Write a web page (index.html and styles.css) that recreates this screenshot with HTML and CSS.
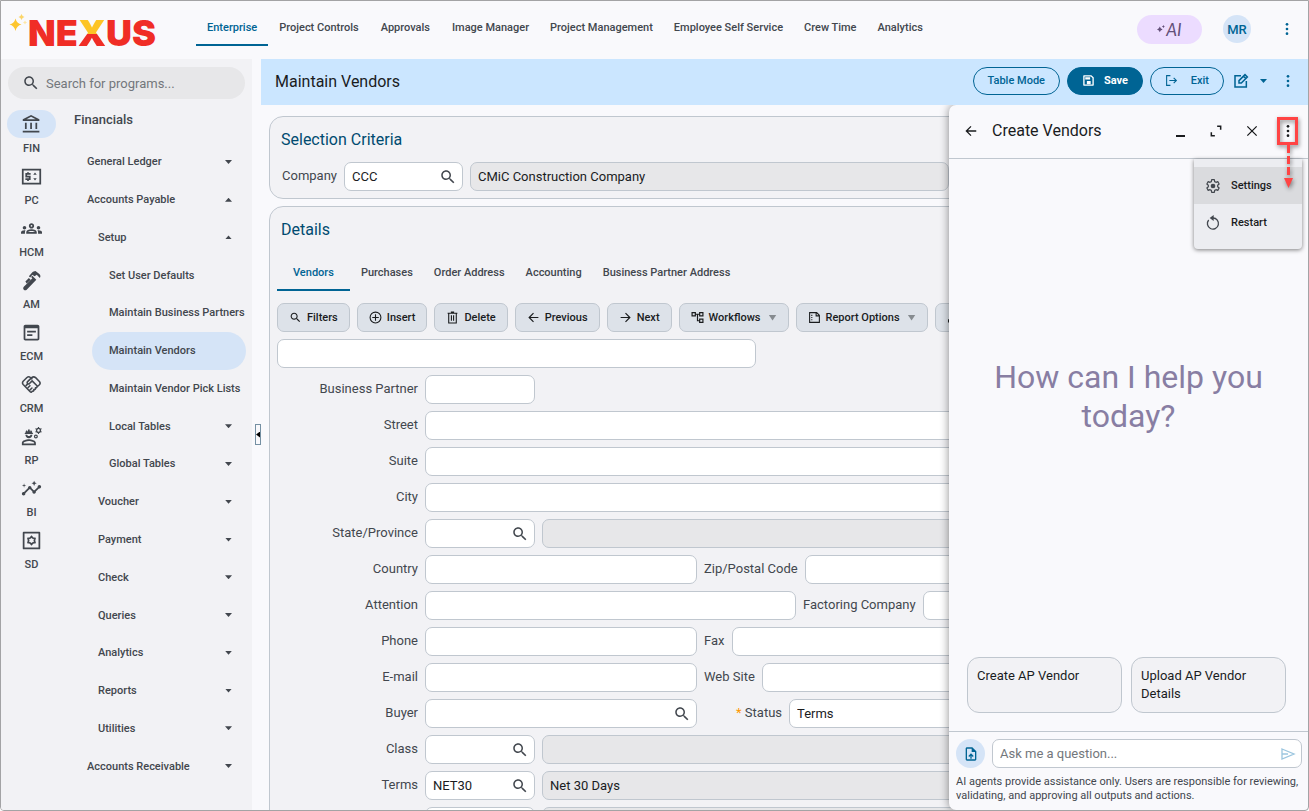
FILE: index.html
```html
<!DOCTYPE html>
<html lang="en">
<head>
<meta charset="utf-8">
<meta name="viewport" content="width=device-width, initial-scale=1">
<title>Maintain Vendors</title>
<link rel="stylesheet" href="styles.css">
</head>

<body>

<svg class="sprite" aria-hidden="true">
  <symbol id="i-search" viewBox="0 0 24 24"><path d="M15.5 14h-.79l-.28-.27C15.41 12.59 16 11.11 16 9.5 16 5.91 13.09 3 9.5 3S3 5.91 3 9.5 5.91 16 9.5 16c1.61 0 3.09-.59 4.23-1.57l.27.28v.79l5 4.99L20.49 19l-4.99-5zm-6 0C7.01 14 5 11.99 5 9.5S7.01 5 9.5 5 14 7.01 14 9.5 11.99 14 9.5 14z"/></symbol>
  <symbol id="i-bank" viewBox="0 0 24 24"><path d="M6.500 10h-2v7h2v-7zm6 0h-2v7h2v-7zm8.500 9H2v2h19v-2zm-2.500-9h-2v7h2v-7zm-7-6.740L16.710 6H6.290l5.210-2.740m0-2.260L2 6v2h19V6l-9.500-5z"/></symbol>
  <symbol id="i-pc" viewBox="0 0 24 24"><path fill="none" stroke="currentColor" stroke-width="2" d="M2 4h20v16H2z"/><path fill="none" stroke="currentColor" stroke-width="2" d="M11 9H6v3h4v3H5M8 7v2m0 6v2"/><path d="M14 10l2-2.500 2 2.500zm0 4l2 2.500 2-2.500z"/></symbol>
  <symbol id="i-groups" viewBox="0 0 24 24"><path d="M4 13c1.1 0 2-.9 2-2s-.9-2-2-2-2 .9-2 2 .9 2 2 2zm1.130 1.100c-.37-.06-.74-.1-1.130-.1-.99 0-1.930.21-2.780.58C.48 14.900 0 15.620 0 16.430V18h4.500v-1.610c0-.83.23-1.610.63-2.290zM20 13c1.100 0 2-.9 2-2s-.9-2-2-2-2 .9-2 2 .9 2 2 2zm4 3.430c0-.81-.48-1.530-1.220-1.850-.85-.37-1.790-.58-2.780-.58-.39 0-.76.04-1.130.1.4.68.63 1.460.63 2.290V18H24v-1.570zM16.240 13.650c-1.170-.52-2.610-.9-4.240-.9s-3.070.39-4.240.9C6.680 14.130 6 15.210 6 16.390V18h12v-1.610c0-1.180-.68-2.260-1.760-2.740zM8.070 16c.09-.23.13-.39.91-.69.97-.38 1.990-.56 3.020-.56s2.050.18 3.020.56c.77.3.81.46.91.69H8.070zM12 8c.55 0 1 .45 1 1s-.45 1-1 1-1-.45-1-1 .45-1 1-1m0-2c-1.660 0-3 1.340-3 3s1.340 3 3 3 3-1.340 3-3-1.340-3-3-3z"/></symbol>
  <symbol id="i-plumbing" viewBox="0 0 24 24"><path d="m15.500 9 2 2L6.500 22.500c-1 1-2.400 1-3.300 0-.9-.9-.9-2.300 0-3.300L13 9.500l-1.500-1.500 1.400-1.400zM5 13l4-4 2 2-4.500 4.500zM9 7l4-4.500c1-.9 2-1.300 3.500-1.500L21 4.500c1.500 1.500 1.500 3 .5 4.500L18 5.500 15.500 7 13 5.500 10.500 8.500z"/></symbol>
  <symbol id="i-wysiwyg" viewBox="0 0 24 24"><path d="M19 3H5c-1.110 0-2 .9-2 2v14c0 1.100.89 2 2 2h14c1.100 0 2-.9 2-2V5c0-1.100-.89-2-2-2zm0 16H5V7h14v12zm-2-7H7v-2h10v2zm-4 4H7v-2h6v2z"/></symbol>
  <symbol id="i-handshake" viewBox="0 0 24 24"><path fill="none" stroke="currentColor" stroke-width="1.800" stroke-linejoin="round" stroke-linecap="round" d="M12.500 5.500 10.800 4C9.500 3 8 3 6.800 4L2.500 8.300c-1 1.200-1 2.500 0 3.700l8 8.300c.8.900 2 .7 2.200-.6 1.200.3 2.200-.6 2-1.900 1.300.2 2.200-.9 1.900-2.100 1.300 0 2.200-1 1.700-2.300l-5.600-5.500-3 3c-1.400 1.200-3.200-.3-2.400-1.900l4.900-4.800c1.500-1.300 3-1.300 4.500 0l4.300 4.300c1.200 1.400 1.200 2.500 0 3.800l-2.500 2.300M6 13l2-2m.2 4.500 2-2m.3 4.500 2-2"/></symbol>
  <symbol id="i-engineer" viewBox="0 0 24 24"><path d="M9 15c-2.670 0-8 1.340-8 4v3h16v-3c0-2.660-5.330-4-8-4zm-6 5v-1c0-.7 3-2 6-2s6 1.300 6 2v1zM4.700 9h8.600c.8 0 .8-1 0-1H13c0-1.500-.8-2.800-2-3.400V6h-1V4H8v2H7V4.600C5.800 5.200 5 6.500 5 8h-.3c-.8 0-.8 1 0 1zM5 10c0 2.200 1.800 4 4 4s4-1.800 4-4h-2c-.5 2-3.500 2-4 0z"/><circle cx="20" cy="5" r="2.200" fill="none" stroke="currentColor" stroke-width="1.500"/><path fill="none" stroke="currentColor" stroke-width="1.300" d="M20 1v2m0 4v2m-3.500-6 1.700 1m3.600 2 1.700 1m0-4-1.700 1m-3.600 2-1.700 1"/><circle cx="17" cy="12" r="1.600" fill="none" stroke="currentColor" stroke-width="1.400"/></symbol>
  <symbol id="i-insights" viewBox="0 0 24 24"><path d="M21 8c-1.450 0-2.260 1.440-1.930 2.510l-3.550 3.560c-.3-.09-.74-.09-1.040 0l-2.550-2.550C12.270 10.450 11.460 9 10 9c-1.450 0-2.270 1.440-1.930 2.520l-4.560 4.550C2.440 15.740 1 16.550 1 18c0 1.100.9 2 2 2 1.450 0 2.260-1.440 1.930-2.510l4.550-4.560c.3.09.74.09 1.040 0l2.550 2.550C12.730 16.550 13.540 18 15 18c1.450 0 2.270-1.440 1.930-2.520l3.560-3.550C21.560 12.260 23 11.450 23 10c0-1.100-.9-2-2-2zM15 9l.94-2.070L18 6l-2.060-.93L15 3l-.92 2.070L12 6l2.080.93zM3.500 11 4 9l2-.5L4 8l-.5-2L3 8l-2 .5L3 9z"/></symbol>
  <symbol id="i-gear" viewBox="0 0 24 24"><path fill="none" stroke="currentColor" stroke-width="1.800" stroke-linejoin="round" d="M10 2.500h4l.5 2.900 2 1.100 2.700-1 2 3.400-2.200 1.900v2.400l2.200 1.900-2 3.400-2.700-1-2 1.100-.5 2.900h-4l-.5-2.900-2-1.100-2.700 1-2-3.400L5 13.200v-2.400L2.800 8.900l2-3.400 2.700 1 2-1.100z"/><circle cx="12" cy="12" r="3.500"/></symbol>
  <symbol id="i-sd" viewBox="0 0 24 24"><path fill="none" stroke="currentColor" stroke-width="2" stroke-linejoin="round" d="M3 3h18v18H3z"/><path fill="none" stroke="currentColor" stroke-width="2" d="m12 7.500 1.500 1.700 2.400.5-.6 2.300.6 2.300-2.400.5-1.500 1.700-1.500-1.700-2.400-.5.6-2.300-.6-2.300 2.400-.5z"/></symbol>
  <symbol id="i-dots" viewBox="0 0 24 24"><circle cx="12" cy="5" r="2"/><circle cx="12" cy="12" r="2"/><circle cx="12" cy="19" r="2"/></symbol>
  <symbol id="i-save" viewBox="0 0 24 24"><path fill="none" stroke="currentColor" stroke-width="2.500" stroke-linejoin="round" d="M3.500 3.500H17L20.500 7v13.500h-17z"/><path d="M6 6h9v4H6zm3 7h7v6H9z"/></symbol>
  <symbol id="i-exit" viewBox="0 0 24 24"><path fill="none" stroke="currentColor" stroke-width="2" d="M10 3H3v18h7M8 12h13m-5-5 5 5-5 5"/></symbol>
  <symbol id="i-edit" viewBox="0 0 24 24"><path fill="none" stroke="currentColor" stroke-width="2.300" d="M12 4H3v17h17v-9M9 15v-3.500l9-9 3.500 3.500-9 9zM16 5l3 3"/></symbol>
  <symbol id="i-plus" viewBox="0 0 24 24"><circle cx="12" cy="12" r="10" fill="none" stroke="currentColor" stroke-width="2"/><path fill="none" stroke="currentColor" stroke-width="2" d="M12 6v12M6 12h12"/></symbol>
  <symbol id="i-trash" viewBox="0 0 24 24"><path fill="none" stroke="currentColor" stroke-width="2" d="M5 5v17h14V5M3 4h18M9 2h6M10 8v10m4-10v10"/></symbol>
  <symbol id="i-left" viewBox="0 0 24 24"><path fill="none" stroke="currentColor" stroke-width="2.200" d="M21 12H4m8-8-8 8 8 8"/></symbol>
  <symbol id="i-right" viewBox="0 0 24 24"><path fill="none" stroke="currentColor" stroke-width="2.200" d="M3 12h17m-8-8 8 8-8 8"/></symbol>
  <symbol id="i-flow" viewBox="0 0 24 24"><path fill="none" stroke="currentColor" stroke-width="2.200" d="M2 3h6v6H2zM16 3h6v6h-6zM16 15h6v6h-6zM8 6h8M12 6v12h4"/></symbol>
  <symbol id="i-report" viewBox="0 0 24 24"><path fill="none" stroke="currentColor" stroke-width="2" d="M3 3h13l5 5v13H3zM15 3v6h6"/><path d="M6 7h2v2H6zm0 4h2v2H6zm0 4h2v2H6z"/></symbol>
  <symbol id="i-download" viewBox="0 0 24 24"><path fill="none" stroke="currentColor" stroke-width="2.200" d="M3 15v5h18v-5M12 3v12m-5-5 5 5 5-5"/></symbol>
  <symbol id="i-expand" viewBox="0 0 24 24"><path fill="none" stroke="currentColor" stroke-width="2.600" d="M14 4h6v6M10 20H4v-6"/></symbol>
  <symbol id="i-close" viewBox="0 0 24 24"><path fill="none" stroke="currentColor" stroke-width="2.200" d="m4 4 16 16M20 4 4 20"/></symbol>
  <symbol id="i-restart" viewBox="0 0 24 24"><path fill="none" stroke="currentColor" stroke-width="2" d="M12 4.500a8.300 8.300 0 1 1-6.500 3"/><path d="m13 0-6 4.500L13 9z"/></symbol>
  <symbol id="i-upload" viewBox="0 0 24 24"><path d="M14 2H6c-1.100 0-2 .9-2 2v16c0 1.100.9 2 2 2h12c1.100 0 2-.9 2-2V8l-6-6zm4 18H6V4h7v5h5v11zM8 15l1.400 1.400 1.600-1.600V19h2v-4.200l1.600 1.600L16 15l-4-4z"/></symbol>
  <symbol id="i-send" viewBox="0 0 24 24"><path fill="none" stroke="currentColor" stroke-width="2" d="M3 4.500 21 12 3 19.500V4.500zM3 12h9"/></symbol>
</svg>

<div class="app">
  <header class="hd">
    <a class="logo" href="#home" aria-label="NEXUS">
      <svg class="logo__stars" viewBox="0 0 18 18" aria-hidden="true">
        <path fill="#fdc62f" d="M6.500 4.500q1.200 5 6 6-4.800 1-6 6.500-1.200-5.500-6-6.500 4.800-1 6-6z"/>
        <path fill="#fbd568" d="M12.500 0q.7 2.300 3 3-2.300.7-3 3-.7-2.300-3-3 2.300-.7 3-3z"/>
        <path fill="#fde6a4" d="M16 6.500q.4 1.600 2 2-1.600.4-2 2-.4-1.600-2-2 1.600-.4 2-2z"/>
      </svg>
      <span class="logo__text">NE<span class="logo__x">X</span>US</span>
    </a>
    <nav class="hd__nav">
      <a class="hd__a hd__a--active" href="#enterprise">Enterprise</a>
      <a class="hd__a" href="#project-controls">Project Controls</a>
      <a class="hd__a" href="#approvals">Approvals</a>
      <a class="hd__a" href="#images">Image Manager</a>
      <a class="hd__a" href="#pm">Project Management</a>
      <a class="hd__a" href="#ess">Employee Self Service</a>
      <a class="hd__a" href="#crew">Crew Time</a>
      <a class="hd__a" href="#analytics">Analytics</a>
    </nav>
    <div class="hd__tools">
      <button type="button" class="ai">
        <svg class="ai__star" viewBox="0 0 10 10" aria-hidden="true"><path d="M3.500 2q.6 2.900 3.500 3.500Q4.100 6.100 3.500 9 2.900 6.100 0 5.500 2.900 4.900 3.500 2zM8 0q.3 1.700 2 2-1.700.3-2 2-.3-1.700-2-2 1.700-.3 2-2z"/></svg>
        <span>AI</span>
      </button>
      <button type="button" class="avatar">MR</button>
      <button type="button" class="ibtn ibtn--blue" aria-label="More"><svg class="icon"><use href="#i-dots"/></svg></button>
    </div>
  </header>

  <div class="body">
    <aside class="side">
      <div class="finder">
        <svg class="icon icon--l"><use href="#i-search"/></svg>
        <input type="search" aria-label="Search for programs" placeholder="Search for programs...">
      </div>
      <div class="side__cols">
        <nav class="rail">
          <a class="rail__a rail__a--active" href="#fin"><span class="rail__i"><svg class="icon"><use href="#i-bank"/></svg></span>FIN</a>
          <a class="rail__a" href="#pc"><span class="rail__i"><svg class="icon"><use href="#i-pc"/></svg></span>PC</a>
          <a class="rail__a" href="#hcm"><span class="rail__i"><svg class="icon"><use href="#i-groups"/></svg></span>HCM</a>
          <a class="rail__a" href="#am"><span class="rail__i"><svg class="icon"><use href="#i-plumbing"/></svg></span>AM</a>
          <a class="rail__a" href="#ecm"><span class="rail__i"><svg class="icon"><use href="#i-wysiwyg"/></svg></span>ECM</a>
          <a class="rail__a" href="#crm"><span class="rail__i"><svg class="icon"><use href="#i-handshake"/></svg></span>CRM</a>
          <a class="rail__a" href="#rp"><span class="rail__i"><svg class="icon"><use href="#i-engineer"/></svg></span>RP</a>
          <a class="rail__a" href="#bi"><span class="rail__i"><svg class="icon"><use href="#i-insights"/></svg></span>BI</a>
          <a class="rail__a" href="#sd"><span class="rail__i"><svg class="icon"><use href="#i-sd"/></svg></span>SD</a>
        </nav>
        <nav class="tree">
          <h2 class="tree__title">Financials</h2>
          <ul class="tree__ul">
            <li><button type="button" class="tree__b caret">General Ledger</button></li>
            <li><button type="button" class="tree__b caret caret--up">Accounts Payable</button></li>
            <li class="l2"><button type="button" class="tree__b caret caret--up">Setup</button></li>
            <li class="l3"><a class="tree__b" href="#defaults">Set User Defaults</a></li>
            <li class="l3"><a class="tree__b" href="#partners">Maintain Business Partners</a></li>
            <li class="l3"><a class="tree__b tree__b--active" href="#vendors">Maintain Vendors</a></li>
            <li class="l3"><a class="tree__b" href="#picklists">Maintain Vendor Pick Lists</a></li>
            <li class="l3"><button type="button" class="tree__b caret">Local Tables</button></li>
            <li class="l3"><button type="button" class="tree__b caret">Global Tables</button></li>
            <li class="l2"><button type="button" class="tree__b caret">Voucher</button></li>
            <li class="l2"><button type="button" class="tree__b caret">Payment</button></li>
            <li class="l2"><button type="button" class="tree__b caret">Check</button></li>
            <li class="l2"><button type="button" class="tree__b caret">Queries</button></li>
            <li class="l2"><button type="button" class="tree__b caret">Analytics</button></li>
            <li class="l2"><button type="button" class="tree__b caret">Reports</button></li>
            <li class="l2"><button type="button" class="tree__b caret">Utilities</button></li>
            <li><button type="button" class="tree__b caret">Accounts Receivable</button></li>
          </ul>
        </nav>
      </div>
    </aside>

    <div class="gutter"><button type="button" class="gutter__b" aria-label="Collapse menu"></button></div>

    <main class="main">
      <div class="bar">
        <h1 class="bar__title">Maintain Vendors</h1>
        <button type="button" class="pill">Table Mode</button>
        <button type="button" class="pill pill--fill"><svg class="icon"><use href="#i-save"/></svg>Save</button>
        <button type="button" class="pill pill--exit"><svg class="icon"><use href="#i-exit"/></svg>Exit</button>
        <button type="button" class="ibtn ibtn--blue ibtn--edit caret" aria-label="Edit"><svg class="icon"><use href="#i-edit"/></svg></button>
        <button type="button" class="ibtn ibtn--blue" aria-label="More actions"><svg class="icon"><use href="#i-dots"/></svg></button>
      </div>

      <div class="content">
        <section class="card">
          <h2 class="card__title">Selection Criteria</h2>
          <div class="row row--company">
            <label for="company">Company</label>
            <div class="field w-company"><input id="company" value="CCC"><button type="button" class="lookup" aria-label="Find company"><svg class="icon"><use href="#i-search"/></svg></button></div>
            <div class="field field--ro w-xl"><input aria-label="Company name" value="CMiC Construction Company" readonly></div>
          </div>
        </section>

        <section class="card card--details">
          <h2 class="card__title">Details</h2>
          <nav class="tabs">
            <a class="tabs__a tabs__a--active" href="#tab-vendors">Vendors</a>
            <a class="tabs__a" href="#tab-purchases">Purchases</a>
            <a class="tabs__a" href="#tab-order">Order Address</a>
            <a class="tabs__a" href="#tab-accounting">Accounting</a>
            <a class="tabs__a" href="#tab-bpa">Business Partner Address</a>
          </nav>
          <div class="tools">
            <button type="button" class="tool"><svg class="icon"><use href="#i-search"/></svg>Filters</button>
            <button type="button" class="tool"><svg class="icon"><use href="#i-plus"/></svg>Insert</button>
            <button type="button" class="tool"><svg class="icon"><use href="#i-trash"/></svg>Delete</button>
            <button type="button" class="tool"><svg class="icon"><use href="#i-left"/></svg>Previous</button>
            <button type="button" class="tool"><svg class="icon"><use href="#i-right"/></svg>Next</button>
            <button type="button" class="tool tool--menu"><svg class="icon"><use href="#i-flow"/></svg>Workflows</button>
            <button type="button" class="tool tool--menu"><svg class="icon"><use href="#i-report"/></svg>Report Options</button>
            <button type="button" class="tool"><svg class="icon"><use href="#i-download"/></svg>Import</button>
          </div>
          <div class="form">
            <div class="field w-xl"><input aria-label="Vendor"></div>
            <div class="row"><label for="bp">Business Partner</label><div class="field w-s"><input id="bp"></div></div>
            <div class="row"><label for="street">Street</label><div class="field w-fill"><input id="street"></div></div>
            <div class="row"><label for="suite">Suite</label><div class="field w-fill"><input id="suite"></div></div>
            <div class="row"><label for="city">City</label><div class="field w-fill"><input id="city"></div></div>
            <div class="row">
              <label for="state">State/Province</label>
              <div class="field w-s"><input id="state"><button type="button" class="lookup" aria-label="Find state"><svg class="icon"><use href="#i-search"/></svg></button></div>
              <div class="field field--ro w-fill"><input aria-label="State name" readonly></div>
            </div>
            <div class="row">
              <label for="country">Country</label><div class="field w-m"><input id="country"></div>
              <label for="zip">Zip/Postal Code</label><div class="field w-fill"><input id="zip"></div>
            </div>
            <div class="row">
              <label for="attn">Attention</label><div class="field w-l"><input id="attn"></div>
              <label for="factoring">Factoring Company</label><div class="field w-fill"><input id="factoring"></div>
            </div>
            <div class="row">
              <label for="phone">Phone</label><div class="field w-m"><input id="phone"></div>
              <label for="fax">Fax</label><div class="field w-fill"><input id="fax"></div>
            </div>
            <div class="row">
              <label for="email">E-mail</label><div class="field w-m"><input id="email"></div>
              <label for="web">Web Site</label><div class="field w-fill"><input id="web"></div>
            </div>
            <div class="row">
              <label for="buyer">Buyer</label>
              <div class="field w-m"><input id="buyer"><button type="button" class="lookup" aria-label="Find buyer"><svg class="icon"><use href="#i-search"/></svg></button></div>
              <label for="status" class="status"><span class="req">*</span> Status</label>
              <div class="field w-fill"><select id="status"><option>Terms</option></select></div>
            </div>
            <div class="row">
              <label for="class">Class</label>
              <div class="field w-s"><input id="class"><button type="button" class="lookup" aria-label="Find class"><svg class="icon"><use href="#i-search"/></svg></button></div>
              <div class="field field--ro w-fill"><input aria-label="Class name" readonly></div>
            </div>
            <div class="row">
              <label for="terms">Terms</label>
              <div class="field w-s"><input id="terms" value="NET30"><button type="button" class="lookup" aria-label="Find terms"><svg class="icon"><use href="#i-search"/></svg></button></div>
              <div class="field field--ro w-fill"><input aria-label="Terms name" value="Net 30 Days" readonly></div>
            </div>
            <div class="row">
              <label for="more"></label>
              <div class="field w-s"><input id="more"></div>
              <div class="field field--ro w-fill"><input aria-label="Description" readonly></div>
            </div>
          </div>
        </section>

        <!-- agent panel, floats over the form -->
        <aside class="chat">
          <header class="chat__hd">
            <button type="button" class="ibtn" aria-label="Back"><svg class="icon"><use href="#i-left"/></svg></button>
            <h2 class="chat__title">Create Vendors</h2>
            <button type="button" class="ibtn ibtn--min" aria-label="Minimize"></button>
            <button type="button" class="ibtn" aria-label="Expand"><svg class="icon"><use href="#i-expand"/></svg></button>
            <button type="button" class="ibtn" aria-label="Close"><svg class="icon"><use href="#i-close"/></svg></button>
            <button type="button" class="ibtn ibtn--more" aria-label="Options"><svg class="icon"><use href="#i-dots"/></svg></button>
          </header>
          <div class="menu">
            <button type="button" class="menu__b menu__b--active"><svg class="icon"><use href="#i-gear"/></svg>Settings</button>
            <button type="button" class="menu__b"><svg class="icon"><use href="#i-restart"/></svg>Restart</button>
          </div>
          <svg class="callout" viewBox="0 0 28 80" aria-hidden="true">
            <path fill="none" stroke="#f44" stroke-width="3" d="M4.500 3.500h18v25h-18z"/>
            <path fill="none" stroke="#f44" stroke-width="3" stroke-dasharray="8 3" d="M14.500 30v34"/>
            <path fill="#f44" d="M10 63h9l-4.500 10z"/>
          </svg>
          <p class="chat__hello">How can I help you today?</p>
          <div class="chat__sug">
            <button type="button" class="sug">Create AP Vendor</button>
            <button type="button" class="sug">Upload AP Vendor Details</button>
          </div>
          <footer class="chat__ft">
            <div class="ask">
              <button type="button" class="ask__up" aria-label="Upload file"><svg class="icon"><use href="#i-upload"/></svg></button>
              <div class="field w-fill"><input aria-label="Question" placeholder="Ask me a question..."><button type="button" class="lookup lookup--send" aria-label="Send"><svg class="icon"><use href="#i-send"/></svg></button></div>
            </div>
            <p class="chat__note">AI agents provide assistance only. Users are responsible for reviewing, validating, and approving all outputs and actions.</p>
          </footer>
        </aside>
      </div>
    </main>
  </div>
</div>

</body>

</html>
```
FILE: styles.css
```css
/* reset */
*,*::before,*::after{box-sizing:border-box;}
body,h1,h2,p,ul{margin:0;padding:0}
ul{list-style:none}
h1,h2{font-weight:400}
a{color:inherit;text-decoration:none}
button,input,select{font:inherit;color:inherit;margin:0;padding:0;border:0;background:none;letter-spacing:inherit;outline:0}
button{cursor:pointer}
input[type=search]{appearance:none}

:root {
  --page:#f9f9fc;
  --panel:#f2f2f5;
  --line:#c0c7cf;
  --blue:#006494;
  --blue-dark:#004b70;
  --text:#42474e;
  --ink:#1a1c1e;
  --tint:#d5e4f7;
  --readonly:#e7e7e9;
}

/* page */
body{font-family:Roboto,"Liberation Sans",sans-serif;font-size:13px;color:var(--text);background:#fff;}
.sprite{display:none;}
.icon{display:block;width:16px;height:16px;fill:currentColor;flex:none;}
.icon--l{width:18px;height:18px;}
.app{display:flex;flex-direction:column;height:100vh;border:1px solid #a3a3a5;border-radius:0 0 4px 4px;background:var(--page);overflow:hidden;}

/* header */
.hd{display:flex;height:58px;flex:none;}
.logo{display:flex;align-items:flex-start;width:184px;padding:13px 0 0 8px;flex:none;}
.logo__stars{width:18px;height:18px;flex:none;}
.logo__text{font-family:Inter,"Liberation Sans",sans-serif;font-size:36px;font-weight:900;line-height:38px;color:#f02d26;margin-left:1px;}
.logo__x{background:linear-gradient(#fdc426 0 52%,#f02d26 52%);background-clip:text;-webkit-background-clip:text;color:transparent;}
.hd__nav{display:flex;height:45px;margin-left:11px;}
.hd__a{padding:0 11px;font-size:11px;font-weight:500;line-height:54px;white-space:nowrap;}
.hd__a:nth-child(n+4){padding:0 10px 0 11px;}
.hd__a--active{color:var(--blue);border-bottom:2px solid var(--blue);}
.hd__tools{display:flex;align-items:center;margin-left:auto;padding:0 13px 2px 0;}
.ai{display:flex;align-items:center;justify-content:center;gap:1px;width:65px;height:29px;border-radius:15px;background:#ecdcff;color:#635079;font-family:Lato,sans-serif;font-size:17px;font-style:italic;}
.ai__star{width:8px;height:8px;fill:currentColor;}
.avatar{width:28px;height:28px;margin:0 28px 0 21px;border-radius:50%;background:var(--tint);color:var(--blue);font-weight:500;}
.ibtn{display:flex;align-items:center;justify-content:center;width:16px;height:24px;color:var(--ink);flex:none;}
.ibtn--blue{color:var(--blue);}

.body{display:flex;flex:1;min-height:0;}

/* sidebar */
.side{width:251px;flex:none;padding:8px 6px;background:var(--panel);overflow:hidden;}
.finder{display:flex;align-items:center;gap:6px;height:32px;margin:0 1px;padding:0 14px;border-radius:16px;background:var(--readonly);}
.finder input{flex:1;min-width:0;}
.finder input::placeholder{color:#73777c;opacity:1;}
.side__cols{display:flex;margin-top:11px;}
.rail{width:49px;flex:none;font-size:11px;font-weight:500;text-align:center;}
.rail__a{display:block;line-height:22px;margin-bottom:2px;}
.rail__i{display:flex;align-items:center;justify-content:center;height:28px;border-radius:14px;}
.rail__i .icon{width:21px;height:21px;}
.rail__a--active .rail__i{background:var(--tint);}
.tree{flex:1;min-width:0;padding-left:14px;}
.tree__title{padding-left:4px;font-size:13px;font-weight:500;line-height:20px;margin-bottom:13px;}
.tree__ul{display:grid;grid-auto-rows:1fr;height:642px;}
.tree__ul li{display:grid;}
.tree__ul .l2{padding-left:11px;}
.tree__ul .l3{padding-left:22px;}
.tree__b{display:flex;align-items:center;justify-content:space-between;width:100%;padding-left:17px;border-radius:20px;font-size:11px;font-weight:500;text-align:left;white-space:nowrap;}
.tree__b--active{background:var(--tint);}
.caret::after{content:"";width:7px;height:4px;background:currentColor;clip-path:polygon(0 0,100% 0,50% 100%);flex:none;}
.caret--up::after{clip-path:polygon(0 100%,100% 100%,50% 0);}
.tree__b.caret{padding-right:14px;}

.gutter{display:flex;align-items:center;justify-content:flex-end;width:9px;flex:none;}
.gutter__b{display:flex;align-items:center;justify-content:center;width:6px;height:21px;border:1px solid #7590a3;}
.gutter__b::after{content:"";width:4px;height:6px;background:#000;clip-path:polygon(100% 0,100% 100%,0 50%);flex:none;}

/* main */
.main{display:flex;flex-direction:column;flex:1;min-width:0;}
.bar{display:flex;align-items:center;height:46px;flex:none;padding:0 12px 2px 14px;background:#cbe6ff;color:var(--blue);}
.bar__title{flex:1;font-size:16px;color:var(--ink);}
.pill{display:flex;align-items:center;justify-content:space-between;height:28px;margin-right:7px;padding:0 14px 2px;border:1px solid var(--blue);border-radius:14px;font-size:11px;font-weight:500;white-space:nowrap;}
.pill .icon{width:13px;height:13px;}
.pill--fill{width:76px;background:var(--blue);color:#fff;font-weight:700;}
.pill--exit{width:74px;}
.ibtn--edit{justify-content:space-between;width:34px;margin:0 13px 0 2px;}
.content{position:relative;flex:1;min-height:0;padding:11px 8px 0;overflow:hidden;}
.card{margin-bottom:7px;padding:12px 7px 7px;border:1px solid var(--line);border-radius:14px;background:var(--panel);}
.card__title{padding-left:4px;font-size:16px;line-height:22px;color:var(--blue-dark);}
.card--details{height:900px;}

/* fields */
.row{display:flex;gap:7px;}
.row label{line-height:27px;white-space:nowrap;flex:none;}
.form .row label:first-child{width:141px;text-align:right;}
.row--company{margin-top:11px;padding-left:5px;}
.field{display:flex;align-items:center;height:29px;padding:0 5px 0 7px;border:1px solid var(--line);border-radius:7px;background:#fff;color:var(--ink);flex:none;}
.field input,.field select{flex:1;min-width:0;width:100%;height:27px;appearance:none;}
.field--ro{background:var(--readonly);}
.w-s{width:110px;}
.w-company{width:119px;}
.w-m{width:272px;}
.w-l{width:371px;}
.w-xl{width:479px;}
.w-fill{flex:1;min-width:0;}
.lookup{color:var(--text);flex:none;}
.lookup .icon{width:18px;height:18px;}
.lookup--send{color:#9cc6df;}
.lookup--send .icon{width:16px;height:16px;}
.form{display:grid;gap:7px;margin-top:7px;}
.status{padding-left:32px;}
.req{color:#ff9800;}

/* tabs + toolbar */
.tabs{display:flex;height:40px;margin-top:10px;}
.tabs__a{padding:0 10px 0 11px;line-height:44px;font-size:11px;font-weight:500;white-space:nowrap;}
.tabs__a--active{padding:0 16px;color:var(--blue);border-bottom:2px solid var(--blue);}
.tools{display:flex;gap:7px;margin-top:12px;overflow:hidden;}
.tool{display:flex;align-items:center;gap:5px;height:29px;padding:0 11px;border:1px solid var(--line);border-radius:7px;background:#dde2e9;color:var(--ink);font-size:11px;font-weight:500;white-space:nowrap;flex:none;}
.tool .icon{width:13px;height:13px;}
.tool--menu::after{content:"";width:8px;height:6px;margin-left:3px;background:#868b90;clip-path:polygon(0 0,100% 0,50% 100%);}

/* chat */
.chat{position:absolute;top:0;right:0;bottom:0;width:359px;display:flex;flex-direction:column;border-radius:7px 0 4px 7px;background:var(--page);box-shadow:0 0 10px rgba(0,0,0,.45);color:var(--ink);}
.chat__hd{display:flex;align-items:center;gap:20px;height:54px;padding:0 12px 2px 14px;border-bottom:1px solid var(--line);flex:none;}
.chat__hd .icon{width:14px;height:14px;}
.chat__hd .ibtn--more .icon{width:16px;height:16px;}
.chat__title{flex:1;font-size:16px;margin-left:-7px;}
.ibtn--min::after{content:"";width:9px;height:2px;margin-top:10px;background:currentColor;}
.menu{position:absolute;top:54px;right:6px;width:108px;padding:8px 0;border-radius:0 0 4px 4px;background:#ecedf1;box-shadow:0 1px 4px rgba(0,0,0,.5);}
.menu__b{display:flex;align-items:center;gap:10px;width:100%;height:37px;padding:0 11px;font-size:11px;font-weight:500;}
.menu__b .icon{color:var(--text);}
.menu__b--active{background:#dadbde;}
.callout{position:absolute;top:10px;right:6px;width:28px;height:80px;filter:drop-shadow(1px 2px 2px rgba(0,0,0,.45));pointer-events:none;}
.chat__hello{flex:1;display:flex;align-items:center;padding:0 30px 22px;font-size:32px;line-height:39px;text-align:center;color:#887ea3;}
.chat__sug{display:flex;gap:9px;padding:0 22px 18px 18px;}
.sug{flex:1;display:flex;height:56px;padding:9px;border:1px solid var(--line);border-radius:12px;background:var(--panel);line-height:18px;text-align:left;}
.chat__ft{padding:7px 6px 7px 7px;border-top:1px solid var(--line);}
.ask{display:flex;gap:7px;}
.ask__up{display:flex;align-items:center;justify-content:center;width:29px;height:29px;border-radius:50%;background:var(--tint);color:var(--blue);flex:none;}
.ask input::placeholder{color:#73777c;opacity:1;}
.chat__note{margin-top:7px;font-size:11px;line-height:14px;color:var(--text);}
```
